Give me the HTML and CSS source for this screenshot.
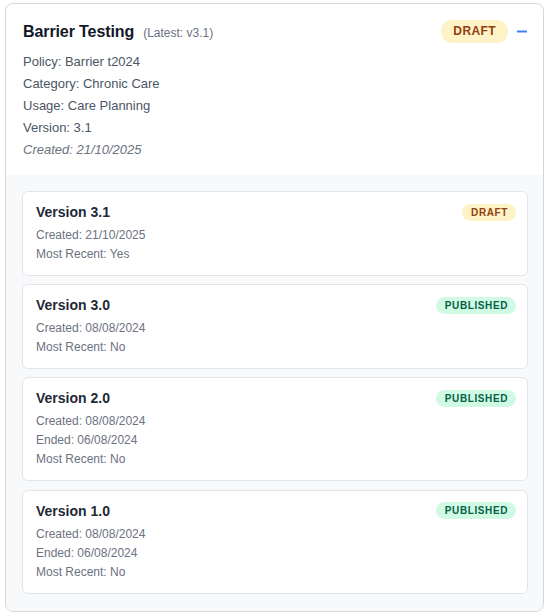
FILE: index.html
```html
<!DOCTYPE html>
<html lang="en">
<head>
<meta charset="utf-8">
<title>Barrier Testing</title>
<link rel="stylesheet" href="styles.css">
</head>
<body>
<div class="page">
  <section class="policy-card">
    <header class="policy-head">
      <div class="head-row">
        <div class="title-wrap">
          <h1 class="title">Barrier Testing</h1>
          <span class="latest">(Latest: v3.1)</span>
        </div>
        <div class="head-actions">
          <span class="badge badge-lg badge-draft">DRAFT</span>
          <button class="collapse-btn" aria-label="Collapse">
            <svg width="10" height="3" viewBox="0 0 10 3"><rect x="0" y="0.5" width="10" height="2" fill="#3b82f6"/></svg>
          </button>
        </div>
      </div>
      <div class="meta">
        <div>Policy: Barrier t2024</div>
        <div>Category: Chronic Care</div>
        <div>Usage: Care Planning</div>
        <div>Version: 3.1</div>
        <div class="created">Created: 21/10/2025</div>
      </div>
    </header>
    <div class="versions">
      <div class="version">
        <div class="version-row">
          <span class="version-title">Version 3.1</span>
          <span class="badge badge-sm badge-draft">DRAFT</span>
        </div>
        <div class="version-line">Created: 21/10/2025</div>
        <div class="version-line">Most Recent: Yes</div>
      </div>
      <div class="version">
        <div class="version-row">
          <span class="version-title">Version 3.0</span>
          <span class="badge badge-sm badge-published">PUBLISHED</span>
        </div>
        <div class="version-line">Created: 08/08/2024</div>
        <div class="version-line">Most Recent: No</div>
      </div>
      <div class="version">
        <div class="version-row">
          <span class="version-title">Version 2.0</span>
          <span class="badge badge-sm badge-published">PUBLISHED</span>
        </div>
        <div class="version-line">Created: 08/08/2024</div>
        <div class="version-line">Ended: 06/08/2024</div>
        <div class="version-line">Most Recent: No</div>
      </div>
      <div class="version">
        <div class="version-row">
          <span class="version-title">Version 1.0</span>
          <span class="badge badge-sm badge-published">PUBLISHED</span>
        </div>
        <div class="version-line">Created: 08/08/2024</div>
        <div class="version-line">Ended: 06/08/2024</div>
        <div class="version-line">Most Recent: No</div>
      </div>
    </div>
  </section>
</div>
</body>
</html>
```

FILE: styles.css
```css
* { box-sizing: border-box; }

html, body {
  margin: 0;
  padding: 0;
  background: #ffffff;
}

body {
  font-family: "Liberation Sans", Arial, sans-serif;
  color: #111827;
}

.page {
  padding: 3px 4px 0 5px;
}

.policy-card {
  border: 1px solid #d4d6db;
  border-radius: 8px;
  overflow: hidden;
  background: #ffffff;
}

.policy-head {
  padding: 16px 16px 14px 17px;
}

.head-row {
  display: flex;
  align-items: center;
  justify-content: space-between;
  height: 23px;
}

.title-wrap {
  display: flex;
  align-items: baseline;
}

.title {
  margin: 0;
  font-size: 16px;
  font-weight: 700;
  color: #111827;
  line-height: 20px;
  letter-spacing: -0.1px;
}

.latest {
  margin-left: 9px;
  font-size: 12px;
  color: #6b7280;
}

.head-actions {
  display: flex;
  align-items: center;
}

.badge {
  display: inline-block;
  border-radius: 999px;
  font-weight: 700;
}

.badge-lg {
  font-size: 12px;
  line-height: 15px;
  padding: 4px 12px 4px 12px;
  letter-spacing: 0.4px;
}

.badge-sm {
  font-size: 10px;
  line-height: 13px;
  padding: 2px 8px 2px 9px;
  letter-spacing: 0.6px;
}

.badge-draft {
  background: #fef3c7;
  color: #92400e;
}

.badge-published {
  background: #d1fae5;
  color: #065f46;
}

.collapse-btn {
  display: flex;
  align-items: center;
  border: 0;
  background: none;
  padding: 0;
  margin-left: 9px;
  cursor: pointer;
}

.collapse-btn svg { display: block; }

.meta {
  margin-top: 8px;
  font-size: 13px;
  line-height: 22px;
  color: #4b5563;
}

.meta .created {
  font-style: italic;
  color: #6b7280;
}

.versions {
  background: #f8f9fb;
  padding: 16px 15px 17px 16px;
  display: flex;
  flex-direction: column;
  gap: 8.2px;
}

.version {
  background: #ffffff;
  border: 1px solid #e3e5e9;
  border-radius: 6px;
  padding: 10px 11px 11px 13px;
}

.version-row {
  display: flex;
  align-items: center;
  justify-content: space-between;
  height: 20px;
  margin-bottom: 4px;
}

.version-title {
  font-size: 14px;
  font-weight: 700;
  color: #1f2937;
}

.version-line {
  font-size: 12px;
  line-height: 19px;
  color: #6b7280;
}
```
